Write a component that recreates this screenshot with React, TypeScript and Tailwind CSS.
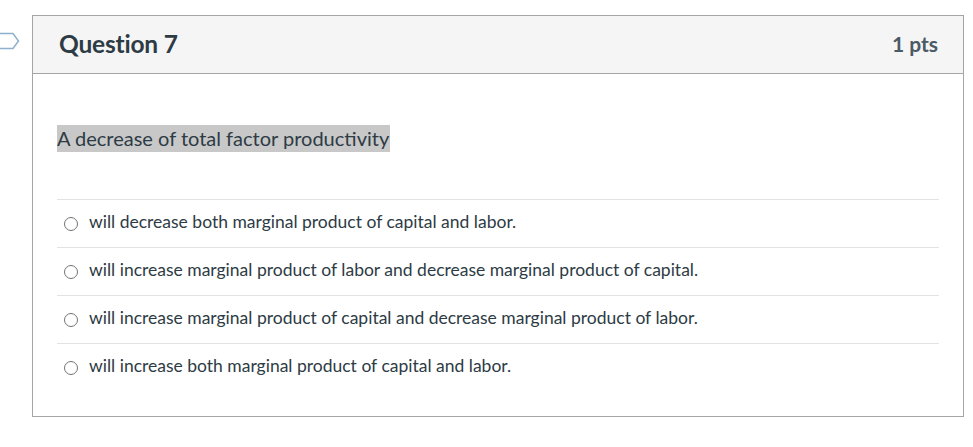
import React from 'react';

const answers = [
    'will decrease both marginal product of capital and labor.',
    'will increase marginal product of labor and decrease marginal product of capital.',
    'will increase marginal product of capital and decrease marginal product of labor.',
    'will increase both marginal product of capital and labor.',
];

function Bookmark() {
    return (
        <svg width="20" height="18" viewBox="0 0 20 18" className="absolute left-0 top-[32px]">
            <path d="M-2 1.5 H13 L18.5 9 L13 16.5 H-2" fill="none" stroke="#8fb0cc" strokeWidth="1.5" />
        </svg>
    );
}

export default function App() {
    return (
        <div className="relative w-[973px] h-[447px] bg-white font-['Lato','Liberation_Sans',sans-serif] text-[#2d3b45]">
            <Bookmark />
            <div className="absolute left-[32px] top-[15px] w-[932px] h-[402px] border border-[#a5a5a5]">
                <div className="flex items-center justify-between h-[58px] bg-[#f5f5f5] border-b border-[#a5a5a5] pl-[26px] pr-[25px] pb-[1px]">
                    <h2 className="text-[24.5px] font-bold tracking-[-0.2px]">Question 7</h2>
                    <span className="text-[21px] font-bold text-[#4b5a65]">1 pts</span>
                </div>
                <div className="px-[24px] pt-[51px]">
                    <p className="inline-block bg-[#c8c8c8] text-[20px] leading-[27px] pr-[1px]">A decrease of total factor productivity</p>
                    <div className="mt-[47px]">
                        {answers.map(a => (
                            <label key={a} className="flex items-center h-[48px] border-t border-[#e3e3e3] pl-[7px] pb-[3px] text-[17.5px]">
                                <span className="w-[14px] h-[14px] rounded-full border-[1.5px] border-[#737373] bg-white mr-[11px] mt-[3px]" />
                                {a}
                            </label>
                        ))}
                    </div>
                </div>
            </div>
        </div>
    );
}
